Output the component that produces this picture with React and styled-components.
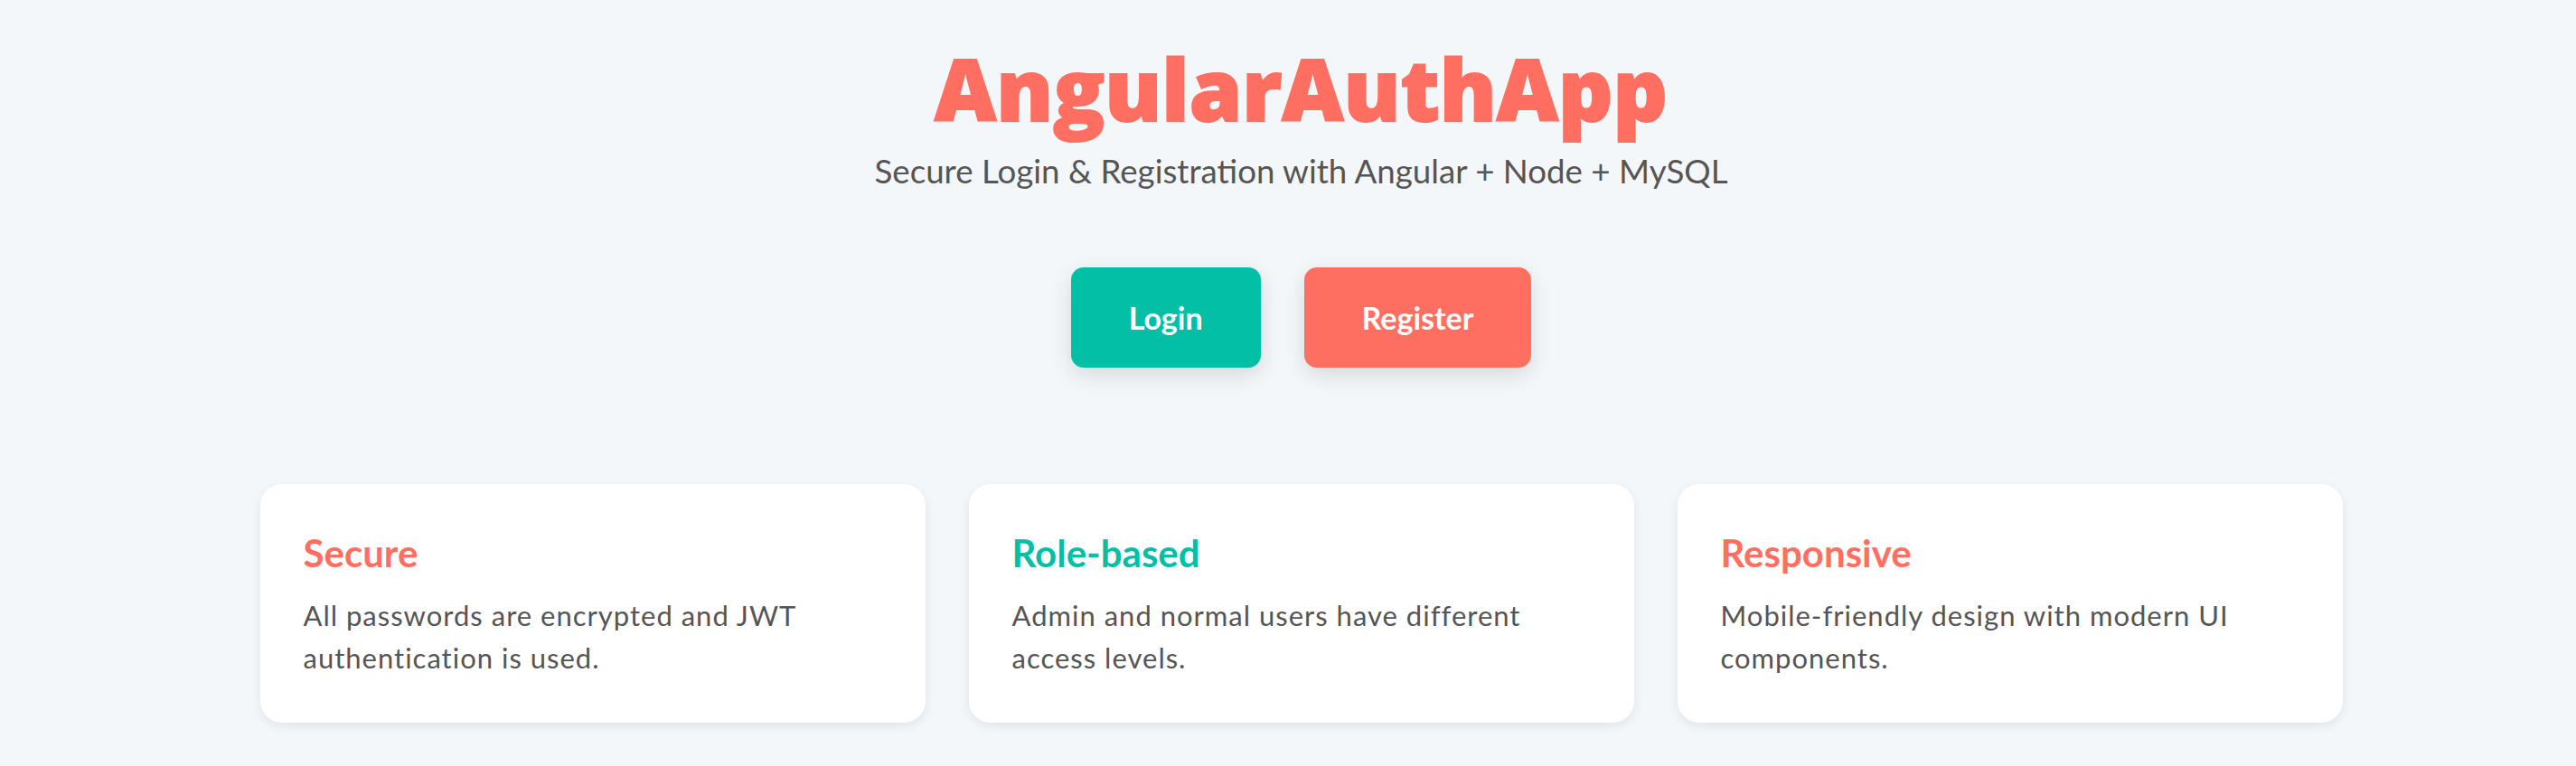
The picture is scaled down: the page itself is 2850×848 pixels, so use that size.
import React from 'react'
import styled, { createGlobalStyle } from 'styled-components'

const GlobalStyle = createGlobalStyle`
    html, body {
        margin: 0;
        padding: 0;
        background: #f4f7fa;
    }
    body {
        font-family: Lato, "Open Sans", "Liberation Sans", sans-serif;
        color: #555;
    }
`

const Page = styled.div`
    min-height: 848px;
    box-sizing: border-box;
    padding: 40px 0 0 29px;
    display: flex;
    flex-direction: column;
    align-items: center;
`

const Hero = styled.header`
    display: flex;
    flex-direction: column;
    align-items: center;
`

const Title = styled.h1`
    margin: 0;
    font-family: "Open Sans", Lato, sans-serif;
    font-size: 94px;
    line-height: 116px;
    font-weight: 800;
    color: #ff6f61;
    -webkit-text-stroke: 2px #ff6f61;
`

const Subtitle = styled.p`
    margin: 9px 0 0;
    font-size: 36.7px;
    line-height: 48px;
    color: #555;
`

const Actions = styled.div`
    display: flex;
    gap: 48px;
    margin-top: 83px;
`

const Button = styled.button`
    border: none;
    border-radius: 14px;
    padding: 32px 64px;
    font-family: inherit;
    font-size: 34px;
    line-height: 47px;
    font-weight: 700;
    color: #fff;
    background: ${({ variant }) => variant === 'primary' ? '#03bfa6' : '#ff6f61'};
    box-shadow: 0 8px 24px rgba(0, 0, 0, 0.12);
    cursor: pointer;
`

const Features = styled.section`
    display: grid;
    grid-template-columns: repeat(3, 736px);
    gap: 48px;
    margin-top: 129px;
`

const Card = styled.div`
    background: #fff;
    border-radius: 24px;
    padding: 48px;
    box-shadow: 0 4px 12px rgba(0, 0, 0, 0.08);
`

const CardTitle = styled.h3`
    margin: 0;
    font-size: 42px;
    line-height: 56px;
    font-weight: 700;
    color: ${({ accent }) => accent};
`

const CardText = styled.p`
    margin: 18px 0 0;
    font-size: 31px;
    line-height: 47px;
    letter-spacing: 1px;
    color: #555;
`

const features = [
    { title: 'Secure', accent: '#ff6f61', text: 'All passwords are encrypted and JWT authentication is used.' },
    { title: 'Role-based', accent: '#03bfa6', text: 'Admin and normal users have different access levels.' },
    { title: 'Responsive', accent: '#ff6f61', text: 'Mobile-friendly design with modern UI components.' },
]

export default function App() {
    return (
        <>
            <GlobalStyle />
            <Page>
                <Hero>
                    <Title>AngularAuthApp</Title>
                    <Subtitle>Secure Login &amp; Registration with Angular + Node + MySQL</Subtitle>
                </Hero>
                <Actions>
                    <Button variant="primary">Login</Button>
                    <Button>Register</Button>
                </Actions>
                <Features>
                    {features.map(f => (
                        <Card key={f.title}>
                            <CardTitle accent={f.accent}>{f.title}</CardTitle>
                            <CardText>{f.text}</CardText>
                        </Card>
                    ))}
                </Features>
            </Page>
        </>
    )
}
